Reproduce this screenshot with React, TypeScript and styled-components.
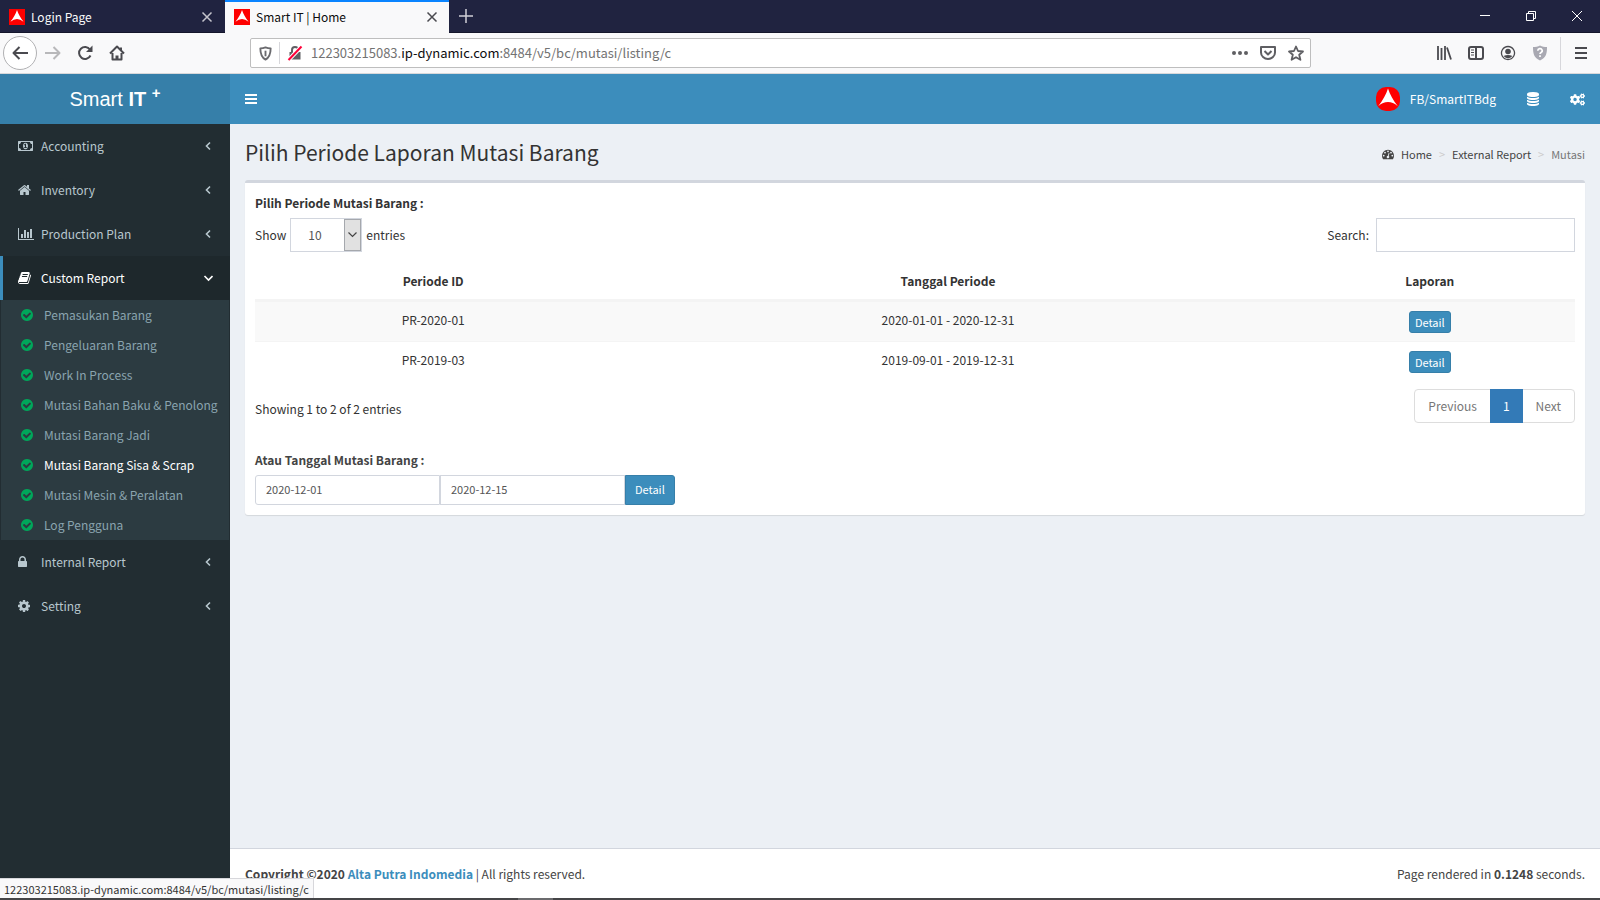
import React from 'react';
import styled, { createGlobalStyle, css } from 'styled-components';
import { FaCogs } from 'react-icons/fa';

const GlobalStyle = createGlobalStyle`
  *, *::before, *::after { box-sizing: border-box; }
  body { margin: 0; }
  button, input, select { font: inherit; color: inherit; margin: 0; }
  a { color: inherit; text-decoration: none; }
`;

const bodyFont = `'Noto Sans CJK SC', 'Noto Sans', sans-serif`;

const Page = styled.div`
  display: flex;
  flex-direction: column;
  min-height: 100vh;
  font: 400 12px/20px ${bodyFont};
  color: #333;
  background: #ecf0f5;
`;

/* ---------- browser frame ---------- */

const TabStrip = styled.div`
  display: flex;
  height: 33px;
  background: #202340;
  border-bottom: 1px solid #14162b;
`;

const Tab = styled.div<{ $active?: boolean }>`
  display: flex;
  align-items: center;
  gap: 6px;
  width: ${p => (p.$active ? 224 : 225)}px;
  height: 33px;
  padding: 1px 8px 0 9px;
  color: ${p => (p.$active ? '#0c0c0d' : '#f9f9fa')};
  ${p => p.$active && css`
    background: #f9f9fa;
    box-shadow: inset 0 2px #0a84ff;
  `}
`;

const TabTitle = styled.span`
  flex: 1;
  white-space: nowrap;
`;

const IconButton = styled.button<{ $w?: number; $color?: string }>`
  display: inline-flex;
  align-items: center;
  justify-content: center;
  width: ${p => p.$w ?? 32}px;
  height: 32px;
  padding: 0;
  border: 0;
  background: none;
  color: ${p => p.$color ?? '#4a4a4f'};
`;

const WindowControls = styled.div`
  display: flex;
  margin-left: auto;
`;

const Toolbar = styled.div`
  display: flex;
  align-items: center;
  height: 41px;
  padding: 0 3px;
  background: #f9f9fa;
  border-bottom: 1px solid #d8d8da;
`;

const BackButton = styled(IconButton)`
  width: 34px;
  height: 34px;
  border: 1px solid #b1b1b3;
  border-radius: 50%;
  background: #fff;
`;

const UrlBar = styled.div`
  display: flex;
  align-items: center;
  flex: 1;
  height: 30px;
  margin: 0 117px;
  border: 1px solid #bebebe;
  border-radius: 2px;
  background: #fff;
  font-size: 13px;
  color: #737373;
`;

const UrlText = styled.div`
  flex: 1;
  padding-left: 2px;
  white-space: nowrap;
  strong { font-weight: 400; color: #0c0c0d; }
`;

const Rule = styled.span<{ $h: number }>`
  width: 1px;
  height: ${p => p.$h}px;
  background: #d7d7db;
`;

const MenuRule = styled(Rule)`
  margin: 0 4px;
`;

/* ---------- application header ---------- */

const Header = styled.header`
  display: flex;
  height: 50px;
  background: #3c8dbc;
  color: #fff;
`;

const Logo = styled.a`
  width: 230px;
  background: #367fa9;
  text-align: center;
  font: 400 20px/50px 'Liberation Sans', Arial, sans-serif;
  sup {
    font-size: 15px;
    font-weight: 700;
    line-height: 0;
  }
`;

const HeaderNav = styled.nav`
  display: flex;
  flex: 1;
  justify-content: space-between;
  align-items: center;
`;

const HeaderGroup = styled.div`
  display: flex;
  align-items: center;
`;

const HeaderButton = styled.button`
  display: flex;
  align-items: center;
  gap: 10px;
  height: 50px;
  padding: 0 15px;
  border: 0;
  background: none;
  color: #fff;
`;

/* ---------- sidebar ---------- */

const Body = styled.div`
  display: flex;
  flex: 1;
`;

const Sidebar = styled.aside`
  flex: 0 0 230px;
  background: #222d32;
  color: #b8c7ce;
`;

const MenuLink = styled.a<{ $active?: boolean }>`
  display: flex;
  align-items: center;
  gap: 3px;
  height: 44px;
  padding: 0 17px 0 15px;
  border-left: 3px solid ${p => (p.$active ? '#3c8dbc' : 'transparent')};
  background: ${p => (p.$active ? '#1e282c' : 'transparent')};
  color: ${p => (p.$active ? '#fff' : 'inherit')};
`;

const MenuIcon = styled.span`
  display: flex;
  width: 20px;
`;

const MenuText = styled.span`
  flex: 1;
`;

const SubMenu = styled.ul`
  margin: 0 1px;
  padding: 0;
  list-style: none;
  background: #2c3b41;
`;

const SubLink = styled.a<{ $active?: boolean }>`
  display: flex;
  align-items: center;
  gap: 10px;
  height: 30px;
  padding-left: 19px;
  white-space: nowrap;
  color: ${p => (p.$active ? '#fff' : '#8aa4af')};
  svg { color: #00a65a; }
`;

/* ---------- content ---------- */

const Main = styled.div`
  display: flex;
  flex: 1;
  flex-direction: column;
  min-width: 0;
`;

const ContentHeader = styled.div`
  display: flex;
  align-items: center;
  justify-content: space-between;
  height: 56px;
  padding: 0 15px;
`;

const Title = styled.h1`
  margin: 0;
  font-size: 21px;
  font-weight: 400;
  line-height: 28px;
`;

const Breadcrumb = styled.ol`
  display: flex;
  align-items: center;
  margin: 0;
  padding: 4px 0 0;
  list-style: none;
  font-size: 11px;
  color: #444;
  li { display: flex; align-items: center; gap: 7px; }
  li + li::before { content: '>'; padding-left: 7px; color: #ccc; }
  li:last-child { color: #777; }
`;

const Box = styled.section`
  margin: 0 15px;
  padding: 10px;
  border-top: 3px solid #d2d6de;
  border-radius: 3px;
  background: #fff;
  box-shadow: 0 1px 1px rgba(0, 0, 0, 0.1);
`;

const Caption = styled.h2<{ $soft?: boolean }>`
  margin: 0 0 5px;
  font-size: 12px;
  font-weight: 700;
  line-height: 20px;
  color: ${p => (p.$soft ? '#444' : '#333')};
`;

const Spread = styled.div`
  display: flex;
  justify-content: space-between;
  align-items: flex-start;
`;

const FieldLabel = styled.label<{ $gap: number }>`
  display: flex;
  align-items: center;
  gap: ${p => p.$gap}px;
`;

const SelectWrap = styled.span`
  position: relative;
  display: flex;
`;

const Select = styled.select`
  appearance: none;
  width: 72px;
  height: 34px;
  padding: 0 17px;
  border: 1px solid #d2d6de;
  border-radius: 0;
  background: #fff;
  color: #555;
`;

const SelectArrow = styled.span`
  position: absolute;
  top: 1px;
  right: 1px;
  bottom: 1px;
  display: flex;
  align-items: center;
  justify-content: center;
  width: 17px;
  border: 1px solid #a5a8ad;
  background: #e1e1e1;
  pointer-events: none;
`;

const SearchInput = styled.input`
  width: 199px;
  height: 34px;
  padding: 6px 12px;
  border: 1px solid #d2d6de;
  background: #fff;
`;

const Table = styled.table`
  width: 100%;
  margin: 11px 0 8px;
  border-collapse: separate;
  border-spacing: 0;
  table-layout: fixed;
  text-align: center;
  th { padding: 8px; border-bottom: 2px solid #f4f4f4; font-weight: 700; }
  td { height: 40px; padding: 8px 8px 7px; border-top: 1px solid #f4f4f4; vertical-align: top; }
  tbody tr:nth-child(odd) { background: #f9f9f9; }
`;

const Col = styled.col<{ $w: number }>`
  width: ${p => p.$w}%;
`;

const SmallButton = styled.button`
  height: 22px;
  margin-top: 1px;
  padding: 0 5px;
  border: 1px solid #367fa9;
  border-radius: 3px;
  background: #3c8dbc;
  color: #fff;
  font-size: 11px;
  line-height: 20px;
  vertical-align: top;
`;

const Info = styled.div`
  padding-top: 10px;
`;

const Pagination = styled.div`
  display: flex;
  border: 1px solid #ddd;
  border-radius: 4px;
`;

const PageButton = styled.button<{ $current?: boolean }>`
  height: 34px;
  margin: -1px 0;
  padding: 0 13px;
  border: 0;
  background: ${p => (p.$current ? '#337ab7' : 'transparent')};
  color: ${p => (p.$current ? '#fff' : '#777')};
`;

const DateSection = styled.div`
  margin-top: 27px;
`;

const DateGroup = styled.div`
  display: flex;
  font-size: 11px;
`;

const DateInput = styled.input`
  width: 185px;
  height: 30px;
  padding: 4px 10px 6px;
  border: 1px solid #d2d6de;
  background: #fff;
  color: #555;
  &:first-child { border-radius: 3px 0 0 3px; }
`;

const DateButton = styled.button`
  height: 30px;
  padding: 0 9px 2px;
  border: 1px solid #367fa9;
  border-radius: 0 3px 3px 0;
  background: #3c8dbc;
  color: #fff;
`;

const Footer = styled.footer`
  display: flex;
  justify-content: space-between;
  margin-top: auto;
  padding: 15px 15px 14px;
  border-top: 1px solid #d2d6de;
  background: #fff;
  color: #444;
  a { color: #3c8dbc; }
`;

const LinkStatus = styled.div`
  position: fixed;
  left: 0;
  bottom: 2px;
  height: 20px;
  padding: 0 4px;
  border: 1px solid #d7d7db;
  border-width: 1px 1px 0 0;
  background: #f9f9fa;
  color: #333;
  font-size: 11px;
  white-space: nowrap;
`;

const ScreenEdge = styled.div`
  height: 2px;
  background: linear-gradient(90deg, #454547 518px, #6b6b6d 518px, #6b6b6d 553px, #454547 553px);
`;

/* ---------- icons ---------- */

type GlyphProps = { d: string; x?: number; w?: number; size?: number };

const Glyph = ({ d, x = 0, w = 1792, size = 14 }: GlyphProps) => (
  <svg width={Math.round((size * w) / 1792)} height={size} viewBox={`${x} 0 ${w} 1792`} fill="currentColor" aria-hidden="true">
    <path d={d} />
  </svg>
);

const icons = {
  money: 'M768 1152h384v-96h-128v-448h-114l-148 137 77 80q42-37 55-57h2v288h-128v96zm512-256q0 70-21 142t-59.500 134-101.500 101-138 39-138-39-101.500-101-59.500-134-21-142 21-142 59.500-134 101.500-101 138-39 138 39 101.500 101 59.500 134 21 142zm512 256v-512q-106 0-181-75t-75-181h-1152q0 106-75 181t-181 75v512q106 0 181 75t75 181h1152q0-106 75-181t181-75zm128-832v1152q0 26-19 45t-45 19h-1792q-26 0-45-19t-19-45v-1152q0-26 19-45t45-19h1792q26 0 45 19t19 45z',
  home: 'M1472 992v480q0 26-19 45t-45 19h-384v-384h-256v384h-384q-26 0-45-19t-19-45v-480q0-1 .5-3t.5-3l575-474 575 474q1 2 1 6zm223-69l-62 74q-8 9-21 11h-3q-13 0-21-7l-692-577-692 577q-12 8-24 7-13-2-21-11l-62-74q-8-10-7-23.500t11-21.500l719-599q32-26 76-26t76 26l244 204v-195q0-14 9-23t23-9h192q14 0 23 9t9 23v408l219 182q10 8 11 21.500t-7 23.500z',
  chart: 'M640 896v512h-256v-512h256zm384-512v1024h-256v-1024h256zm1024 1152v128h-2048v-1536h128v1408h1920zm-640-896v768h-256v-768h256zm384-384v1152h-256v-1152h256z',
  book: 'M1703 478q40 57 18 129l-275 906q-19 64-76.500 107.500t-122.500 43.500h-923q-77 0-148.500-53.500t-99.500-131.500q-24-67-2-127 0-4 3-27t4-37q1-8-3-21.500t-3-19.500q2-11 8-21t16.500-23.500 16.500-23.500q23-38 45-91.500t30-91.500q3-10 .5-30t-.5-28q3-11 17-28t17-23q21-36 42-92t25-90q1-9-2.500-32t.5-28q4-13 22-30.500t22-22.500q19-26 42.500-84.500t27.500-96.500q1-8-3-25.500t-2-26.500q2-8 9-18t18-23 17-21q8-12 16.500-30.500t15-35 16-36 19.500-32 26.500-23.500 36-11.500 47.500 5.500l-1 3q38-9 51-9h761q74 0 114 56t18 130l-274 906q-36 119-71.500 153.500t-128.500 34.500h-869q-27 0-38 15-11 16-1 43 24 70 144 70h923q29 0 56-15.500t35-41.500l300-987q7-22 5-57 38 15 59 43zm-1064 2q-4 13 2 22.500t20 9.500h608q13 0 25.500-9.500t16.500-22.500l21-64q4-13-2-22.500t-20-9.500h-608q-13 0-25.500 9.500t-16.500 22.500zm-83 256q-4 13 2 22.500t20 9.500h608q13 0 25.500-9.500t16.500-22.500l21-64q4-13-2-22.500t-20-9.500h-608q-13 0-25.500 9.500t-16.500 22.500z',
  lock: 'M640 768h512v-192q0-106-75-181t-181-75-181 75-75 181v192zm832 96v576q0 40-28 68t-68 28h-960q-40 0-68-28t-28-68v-576q0-40 28-68t68-28h32v-192q0-184 132-316t316-132 316 132 132 316v192h32q40 0 68 28t28 68z',
  cog: 'M1152 896q0-106-75-181t-181-75-181 75-75 181 75 181 181 75 181-75 75-181zm512-109v222q0 12-8 23t-20 13l-185 28q-19 54-39 91 35 50 107 138 10 12 10 25t-9 23q-27 37-99 108t-94 71q-12 0-26-9l-138-108q-44 23-91 38-16 136-29 186-7 28-36 28h-222q-14 0-24.500-8.500t-11.500-21.500l-28-184q-49-16-90-37l-141 107q-10 9-25 9-14 0-25-11-126-114-165-168-7-10-7-23 0-12 8-23 15-21 51-66.500t54-70.500q-27-50-41-99l-183-27q-13-2-21-12.500t-8-23.500v-222q0-12 8-23t19-13l186-28q14-46 39-92-40-57-107-138-10-12-10-24 0-10 9-23 26-36 98.500-107.500t94.500-71.500q13 0 26 10l138 107q44-23 91-38 16-136 29-186 7-28 36-28h222q14 0 24.500 8.500t11.500 21.500l28 184q49 16 90 37l142-107q9-9 24-9 13 0 25 10 129 119 165 170 7 8 7 22 0 12-8 23-15 21-51 66.500t-54 70.500q26 50 41 98l183 28q13 2 21 12.500t8 23.500z',
  check: 'M1412 734q0-28-18-46l-91-90q-19-19-45-19t-45 19l-408 407-226-226q-19-19-45-19t-45 19l-91 90q-18 18-18 46 0 27 18 45l362 362q19 19 45 19 27 0 46-19l543-543q18-18 18-45zm252 162q0 209-103 385.500t-279.500 279.500-385.500 103-385.500-103-279.500-279.500-103-385.500 103-385.500 279.500-279.500 385.500-103 385.500 103 279.500 279.500 103 385.500z',
  database: 'M896 768q237 0 443-43t325-127v170q0 69-103 128t-280 93.500-385 34.500-385-34.500-280-93.500-103-128v-170q119 84 325 127t443 43zm0 768q237 0 443-43t325-127v170q0 69-103 128t-280 93.500-385 34.500-385-34.500-280-93.500-103-128v-170q119 84 325 127t443 43zm0-384q237 0 443-43t325-127v170q0 69-103 128t-280 93.500-385 34.500-385-34.500-280-93.500-103-128v-170q119 84 325 127t443 43zm0-1152q208 0 385 34.500t280 93.500 103 128v128q0 69-103 128t-280 93.500-385 34.500-385-34.500-280-93.500-103-128v-128q0-69 103-128t280-93.500 385-34.500z',
  dashboard: 'M384 1152q0-53-37.500-90.500t-90.500-37.500-90.500 37.500-37.500 90.500 37.500 90.500 90.500 37.500 90.500-37.500 37.500-90.500zm192-448q0-53-37.500-90.500t-90.500-37.500-90.500 37.500-37.500 90.500 37.500 90.500 90.500 37.500 90.500-37.500 37.500-90.500zm428 481l101-382q6-26-7.500-48.500t-38.500-29.500-48 6.500-30 39.500l-101 382q-60 5-107 43.500t-63 98.500q-20 77 20 146t117 89 146-20 89-117q16-60-6-117t-72-91zm660-33q0-53-37.500-90.500t-90.500-37.500-90.500 37.500-37.500 90.500 37.500 90.500 90.500 37.500 90.500-37.500 37.500-90.500zm-640-640q0-53-37.500-90.500t-90.500-37.500-90.500 37.500-37.500 90.500 37.500 90.500 90.500 37.500 90.500-37.500 37.500-90.500zm448 192q0-53-37.500-90.500t-90.500-37.500-90.500 37.500-37.500 90.500 37.500 90.500 90.500 37.500 90.500-37.500 37.500-90.500zm320 448q0 261-141 483-19 29-54 29h-1402q-35 0-54-29-141-221-141-483 0-182 71-348t191-286 286-191 348-71 348 71 286 191 191 286 71 348z',
};

const Chevron = ({ open }: { open?: boolean }) => (
  <svg width="10" height="10" viewBox="0 0 10 10" fill="none" stroke="currentColor" strokeWidth="1.600" aria-hidden="true">
    <path d={open ? 'M1.500 3 5.500 7 9.500 3' : 'M7 1.500 3.500 5 7 8.500'} />
  </svg>
);

const Brand = ({ size, round }: { size: number; round?: boolean }) => (
  <svg width={size} height={size} viewBox="0 0 24 24" aria-hidden="true">
    <rect width="24" height="24" rx={round ? 10 : 0} fill="#fe0000" />
    <path d="M12 1.500C14 7.500 17 13 21.800 19.200Q17 15 12 15T2.200 19.200C7 13 10 7.500 12 1.500Z" fill="#fff" />
  </svg>
);

type LineProps = { d: string; size?: number; sw?: number; children?: React.ReactNode };

const Line = ({ d, size = 16, sw = 2, children }: LineProps) => (
  <svg width={size} height={size} viewBox="0 0 16 16" fill="none" stroke="currentColor" strokeWidth={sw} strokeLinejoin="round" aria-hidden="true">
    <path d={d} />
    {children}
  </svg>
);

const cross = 'M3.500 3.500l9 9M12.500 3.500l-9 9';
const shield = 'M8 1.500c2 .8 4 1 5.500 1 0 5-.5 9.500-5.500 12C3 12 2.500 7.500 2.500 2.500 4 2.500 6 2.300 8 1.500Z';
const wideShield = 'M8 .5c2 1.200 4.500 1.500 7 1.500 0 6-.5 10.500-7 13.500C1.500 12.500 1 8 1 2 3.500 2 6 1.700 8 .5Z';

/* ---------- data ---------- */

const reports = [
  'Pemasukan Barang',
  'Pengeluaran Barang',
  'Work In Process',
  'Mutasi Bahan Baku & Penolong',
  'Mutasi Barang Jadi',
  'Mutasi Barang Sisa & Scrap',
  'Mutasi Mesin & Peralatan',
  'Log Pengguna',
];

const menu: { text: string; icon: string; x?: number; w?: number; open?: boolean }[] = [
  { text: 'Accounting', icon: icons.money, w: 1920 },
  { text: 'Inventory', icon: icons.home, x: 64 },
  { text: 'Production Plan', icon: icons.chart, w: 2048 },
  { text: 'Custom Report', icon: icons.book, x: 64, open: true },
  { text: 'Internal Report', icon: icons.lock, x: 320 },
  { text: 'Setting', icon: icons.cog, x: 128 },
];

const periods = [
  { id: 'PR-2020-01', range: '2020-01-01 - 2020-12-31' },
  { id: 'PR-2019-03', range: '2019-09-01 - 2019-12-31' },
];

/* ---------- page ---------- */

const BrowserFrame = () => (
  <>
    <TabStrip>
      <Tab>
        <Brand size={16} />
        <TabTitle>Login Page</TabTitle>
        <IconButton $w={20} $color="#c4c4cc" aria-label="Close Login Page"><Line d={cross} sw={1.5} /></IconButton>
      </Tab>
      <Tab $active>
        <Brand size={16} />
        <TabTitle>Smart IT | Home</TabTitle>
        <IconButton $w={18} aria-label="Close Smart IT"><Line d={cross} sw={1.5} /></IconButton>
      </Tab>
      <IconButton $w={34} $color="#d0d0d6" aria-label="New tab"><Line d="M8 1v14M1 8h14" sw={1.5} /></IconButton>
      <WindowControls>
        <IconButton $w={46} $color="#fff" aria-label="Minimize"><Line d="M3 7.500h10" sw={1} /></IconButton>
        <IconButton $w={46} $color="#fff" aria-label="Restore"><Line d="M3.500 5.500h7v7h-7zM5.500 5.500v-2h7v7h-2" sw={1} /></IconButton>
        <IconButton $w={46} $color="#fff" aria-label="Close window"><Line d="M3 3l10 10M13 3L3 13" sw={1} /></IconButton>
      </WindowControls>
    </TabStrip>
    <Toolbar>
      <BackButton aria-label="Back"><Line d="M16 8H1.500M7.500 2l-6 6 6 6" /></BackButton>
      <IconButton $color="#b8b8ba" aria-label="Forward"><Line d="M0 8h14.500M8.500 2l6 6-6 6" /></IconButton>
      <IconButton aria-label="Reload">
        <Line d="M13.500 10.500A6 6 0 1 1 13 4.500"><path d="M15.500 .5v6.500H9z" fill="currentColor" stroke="none" /></Line>
      </IconButton>
      <IconButton aria-label="Home page">
        <Line d="M1 8.500l7-7 7 7M3.500 8v6.500h9V8"><path d="M8 14v-3.500" strokeWidth="3" /><path d="M12 2.500v3" /></Line>
      </IconButton>
      <UrlBar>
        <IconButton $w={28} $color="#6a6a6e" aria-label="Protection"><Line d={shield} size={15}><path d="M8 5v6" /></Line></IconButton>
        <Rule $h={22} />
        <IconButton $w={29} $color="#5f5f63" aria-label="Connection is not secure">
          <Line d="M5 7V5a3 3 0 0 1 6 0v2">
            <path d="M2.500 7h11v7.500h-11z" fill="currentColor" stroke="none" />
            <path d="M1.500 15L14.500 1.500" stroke="#fff" strokeWidth="4" />
            <path d="M1.500 15L14.500 1.500" stroke="#ff0039" strokeWidth="2" />
          </Line>
        </IconButton>
        <UrlText>122303215083.<strong>ip-dynamic.com</strong>:8484/v5/bc/mutasi/listing/c</UrlText>
        <IconButton $w={28} $color="#5f5f63" aria-label="Page actions">
          <svg width="16" height="16" fill="currentColor"><circle cx="2" cy="8" r="2" /><circle cx="8" cy="8" r="2" /><circle cx="14" cy="8" r="2" /></svg>
        </IconButton>
        <IconButton $w={28} $color="#5f5f63" aria-label="Save to Pocket"><Line d="M1 2h14v5.500a7 6.500 0 0 1-14 0zM4.500 6l3.500 3.500L11.500 6" /></IconButton>
        <IconButton $w={28} $color="#5f5f63" aria-label="Bookmark"><Line d="M8 1.500l2 4.500 5 .5-3.800 3.300 1.200 5L8 12.200l-4.400 2.600 1.200-5L1 6.500 6 6z" sw={1.8} /></IconButton>
      </UrlBar>
      <IconButton aria-label="Library"><Line d="M2 1v14M5.500 3v12M9 1v14M11 2.500l4 12" sw={1.8} /></IconButton>
      <IconButton aria-label="Sidebars"><Line d="M3 2h10q2 0 2 2v8q0 2-2 2H3q-2 0-2-2V4q0-2 2-2zM8 2v12"><path d="M3 5h3M3 7.500h3M3 10h3" strokeWidth="1" /></Line></IconButton>
      <IconButton aria-label="Account">
        <Line d="M8 1.500a6.500 6.500 0 1 0 .01 0z" sw={1.3}><circle cx="8" cy="6.500" r="2.800" fill="currentColor" stroke="none" /><path d="M3.500 11q4.500-2 9 0-4.500 4.500-9 0z" fill="currentColor" stroke="none" /></Line>
      </IconButton>
      <IconButton $color="#a9a9b2" aria-label="Extension">
        <svg width="16" height="16" viewBox="0 0 16 16" aria-hidden="true">
          <path d={wideShield} fill="currentColor" />
          <path d="M5.800 5.700a2.200 2 0 1 1 3.300 1.700Q8 8 8 9M8 10.200v1.800" fill="none" stroke="#fff" strokeWidth="1.700" />
        </svg>
      </IconButton>
      <MenuRule $h={33} />
      <IconButton aria-label="Menu"><Line d="M2 3h12M2 8h12M2 13h12" /></IconButton>
    </Toolbar>
  </>
);

const SideMenu = () => (
  <Sidebar>
    {menu.map(m => (
      <React.Fragment key={m.text}>
        <MenuLink href="#" $active={m.open}>
          <MenuIcon><Glyph d={m.icon} x={m.x} w={m.w} /></MenuIcon>
          <MenuText>{m.text}</MenuText>
          <Chevron open={m.open} />
        </MenuLink>
        {m.open && (
          <SubMenu>
            {reports.map(r => (
              <li key={r}>
                <SubLink href="#" $active={r === 'Mutasi Barang Sisa & Scrap'}>
                  <Glyph d={icons.check} />
                  {r}
                </SubLink>
              </li>
            ))}
          </SubMenu>
        )}
      </React.Fragment>
    ))}
  </Sidebar>
);

const PeriodTable = () => (
  <Table>
    <colgroup><Col $w={27} /><Col $w={51} /><Col $w={22} /></colgroup>
    <thead>
      <tr><th>Periode ID</th><th>Tanggal Periode</th><th>Laporan</th></tr>
    </thead>
    <tbody>
      {periods.map(p => (
        <tr key={p.id}>
          <td>{p.id}</td>
          <td>{p.range}</td>
          <td><SmallButton>Detail</SmallButton></td>
        </tr>
      ))}
    </tbody>
  </Table>
);

export default function App() {
  return (
    <Page>
      <GlobalStyle />
      <BrowserFrame />
      <Header>
        <Logo href="#">Smart <b>IT</b> <sup>+</sup></Logo>
        <HeaderNav>
          <HeaderButton aria-label="Toggle navigation">
            <svg width="12" height="10" fill="currentColor"><path d="M0 0h12v2H0zM0 4h12v2H0zM0 8h12v2H0z" /></svg>
          </HeaderButton>
          <HeaderGroup>
            <HeaderButton><Brand size={24} round />FB/SmartITBdg</HeaderButton>
            <HeaderButton aria-label="Database"><Glyph d={icons.database} /></HeaderButton>
            <HeaderButton aria-label="Settings"><FaCogs size={15} /></HeaderButton>
          </HeaderGroup>
        </HeaderNav>
      </Header>
      <Body>
        <SideMenu />
        <Main>
          <ContentHeader>
            <Title>Pilih Periode Laporan Mutasi Barang</Title>
            <Breadcrumb>
              <li><Glyph d={icons.dashboard} size={12} /><a href="#">Home</a></li>
              <li><a href="#">External Report</a></li>
              <li>Mutasi</li>
            </Breadcrumb>
          </ContentHeader>
          <Box>
            <Caption>Pilih Periode Mutasi Barang :</Caption>
            <Spread>
              <FieldLabel $gap={4}>
                Show
                <SelectWrap>
                  <Select defaultValue="10"><option>10</option><option>25</option><option>50</option></Select>
                  <SelectArrow>
                    <svg width="9" height="6" fill="none" stroke="#444" strokeWidth="1.200"><path d="M.5 .5l4 4 4-4" /></svg>
                  </SelectArrow>
                </SelectWrap>
                entries
              </FieldLabel>
              <FieldLabel $gap={7}>Search:<SearchInput type="search" /></FieldLabel>
            </Spread>
            <PeriodTable />
            <Spread>
              <Info>Showing 1 to 2 of 2 entries</Info>
              <Pagination>
                <PageButton>Previous</PageButton>
                <PageButton $current>1</PageButton>
                <PageButton>Next</PageButton>
              </Pagination>
            </Spread>
            <DateSection>
              <Caption $soft>Atau Tanggal Mutasi Barang :</Caption>
              <DateGroup>
                <DateInput aria-label="Start date" defaultValue="2020-12-01" />
                <DateInput aria-label="End date" defaultValue="2020-12-15" />
                <DateButton>Detail</DateButton>
              </DateGroup>
            </DateSection>
          </Box>
          <Footer>
            <div><b>Copyright ©2020 <a href="#">Alta Putra Indomedia</a></b> | All rights reserved.</div>
            <div>Page rendered in <b>0.1248</b> seconds.</div>
          </Footer>
        </Main>
      </Body>
      <ScreenEdge />
      <LinkStatus>122303215083.ip-dynamic.com:8484/v5/bc/mutasi/listing/c</LinkStatus>
    </Page>
  );
}
